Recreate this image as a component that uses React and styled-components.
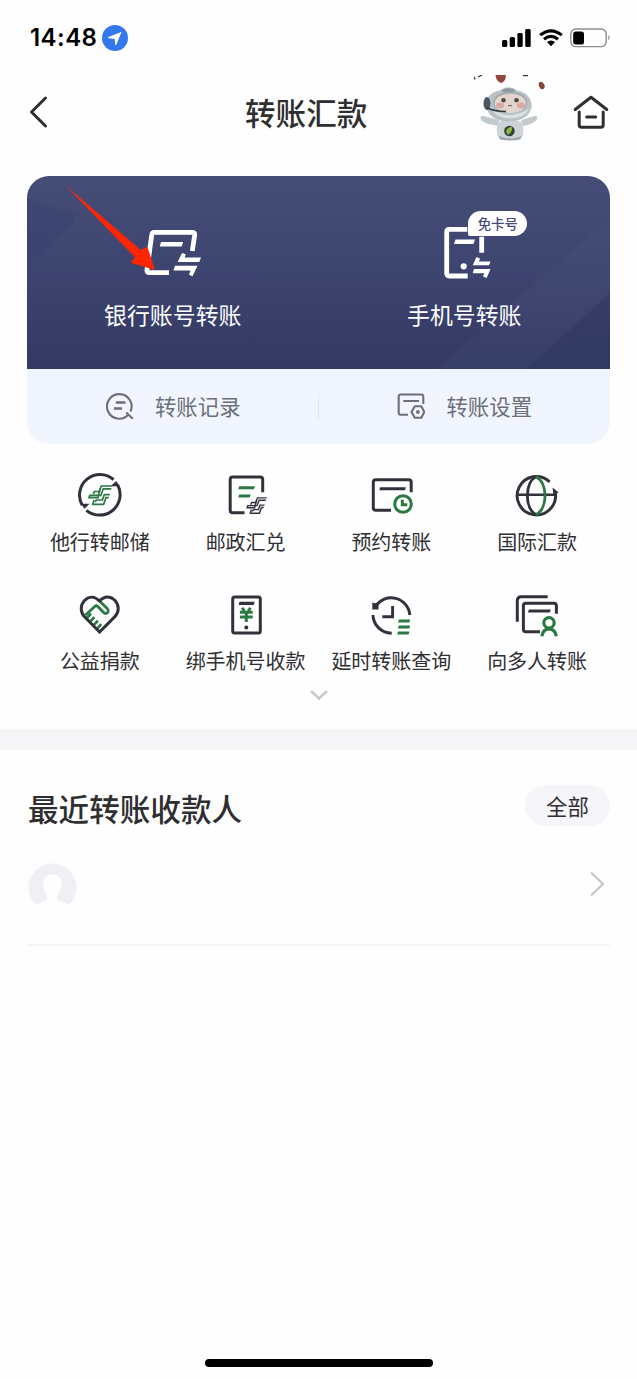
import styled, { createGlobalStyle } from 'styled-components'

const GlobalStyle = createGlobalStyle`
  * {
    box-sizing: border-box;
  }
  body {
    margin: 0;
    background: #fefefe;
    font-family: 'Noto Sans CJK SC', sans-serif;
    color: #2f2f31;
  }
  svg {
    display: block;
    flex: none;
  }
`

const Screen = styled.main`
  width: 637px;
  height: 1379px;
  display: flex;
  flex-direction: column;
  overflow: hidden;
`

const StatusBar = styled.div`
  height: 75px;
  padding: 1px 26px 0 30px;
  display: flex;
  align-items: center;
  justify-content: space-between;
`

const StatusGroup = styled.div`
  display: flex;
  align-items: center;
  gap: ${({ $gap }) => $gap}px;
`

const Time = styled.span`
  font: 600 24px/28px Inter, sans-serif;
  letter-spacing: 0.45px;
  color: #000;
`

const NavBar = styled.header`
  height: 72px;
  padding: 0 28px 0 27px;
  display: grid;
  grid-template-columns: 218px auto 1fr;
  align-items: center;
`

const NavTitle = styled.h1`
  margin: 0;
  font-size: 30.6px;
  font-weight: 500;
  line-height: 44px;
`

const NavActions = styled.div`
  display: flex;
  justify-content: flex-end;
  align-items: center;
  gap: 27px;
`

const Card = styled.section`
  margin: 29px 27px 0;
  border-radius: 22px;
  overflow: hidden;
  background: #f1f5fe;
`

const Hero = styled.div`
  position: relative;
  height: 193px;
  display: flex;
  background: linear-gradient(#464e78, #3d446f 50%, #333963);
`

const Backdrop = styled.svg`
  position: absolute;
  inset: 0;
`

const Pointer = styled.svg`
  position: absolute;
  left: 38px;
  top: 9px;
`

const HeroItem = styled.div`
  position: relative;
  flex: 1;
  display: flex;
  flex-direction: column;
  align-items: center;
  padding-top: 46px;
`

const HeroLabel = styled.span`
  margin-top: 15px;
  font-size: 22.9px;
  line-height: 34px;
  color: #fff;
`

const HeroIcon = styled.div`
  position: relative;
  height: 60px;
  padding-left: ${({ $shift = 0 }) => $shift}px;
`

const Badge = styled.span`
  position: absolute;
  left: 36px;
  top: -11px;
  width: 59px;
  height: 25px;
  border-radius: 13px 13px 13px 2px;
  background: #fff;
  color: #454a78;
  font-size: 13.4px;
  font-weight: 500;
  line-height: 24px;
  text-align: center;
  white-space: nowrap;
`

const SubBar = styled.div`
  height: 74.5px;
  display: flex;
  align-items: center;
`

const SubItem = styled.div`
  flex: 1;
  display: flex;
  align-items: center;
  justify-content: center;
  gap: 21px;
  padding-left: 1px;
  font-size: 21.4px;
  line-height: 32px;
  color: #6c6f7a;
`

const SubDivider = styled.div`
  width: 1px;
  height: 25px;
  margin-left: -1px;
  background: #e2e6f0;
`

const Services = styled.section`
  margin: 28px 27px 0;
  display: grid;
  grid-template-columns: repeat(4, 1fr);
  row-gap: 37px;
`

const Service = styled.div`
  height: 82px;
  display: flex;
  flex-direction: column;
  align-items: center;
  justify-content: space-between;
`

const ServiceLabel = styled.span`
  font-size: 20px;
  line-height: 25px;
  white-space: nowrap;
`

const More = styled.div`
  height: 56px;
  padding-top: 16px;
  display: flex;
  justify-content: center;
`

const Band = styled.div`
  height: 21px;
  background: #f6f6f9;
`

const Recent = styled.section`
  padding: 35px 27px 0;
`

const RecentHead = styled.div`
  height: 42px;
  display: flex;
  align-items: center;
  justify-content: space-between;
`

const RecentTitle = styled.h2`
  margin: 5px 0 0 1px;
  font-size: 30.6px;
  font-weight: 500;
  line-height: 42px;
`

const AllButton = styled.button`
  width: 85px;
  height: 41px;
  padding: 0;
  border: none;
  border-radius: 21px;
  background: #f6f6fa;
  color: #2f2f31;
  font: 400 21.4px/40px 'Noto Sans CJK SC', sans-serif;
`

const PayeeRow = styled.div`
  height: 119px;
  padding: 0 4px 2px 0;
  display: flex;
  align-items: center;
  justify-content: space-between;
  border-bottom: 2px solid #f5f5f7;
`

const HomeIndicator = styled.div`
  width: 228px;
  height: 8px;
  margin: auto auto 12px;
  border-radius: 4px;
  background: #000;
`

const DARK = '#32323d'
const GREEN = '#2b7a43'

const stroke = (color, width) => ({ fill: 'none', stroke: color, strokeWidth: width })

// postal emblem, drawn as stepped double strokes
const PostMark = ({ color, x, y, scale = 1 }) => (
  <g transform={`translate(${x} ${y}) scale(${scale})`} {...stroke(color, 1.7)}>
    <path d="M22.500 1H11.500L9.500 6.500H4.500L3.500 9.300" />
    <path d="M21.500 3.800H13.500L11 10.300H0L-.800 12.700H9" />
    <path d="M20 9.700H14.500L12.600 15H6.500L5.500 17.200" />
    <path d="M19 12.600H16.200L13.800 19.300H3L4.200 15" />
    <path d="M10.500 3.500L8 12.500" />
  </g>
)

const ServiceIcon = ({ children }) => (
  <svg width="48" height="48" viewBox="0 0 48 48" {...stroke(DARK, 3)}>{children}</svg>
)

const services = [
  {
    name: '他行转邮储',
    icon: (
      <ServiceIcon>
        <path d="M6.200 33.200A20.500 20.500 0 0 1 37.600 7.700M41.600 12.800A20.500 20.500 0 0 1 10.400 38.300" />
        <path d="M4.900 31.800h8.600l-5 5zM43.500 14.300h-8.900l5.600-5.200z" fill={DARK} stroke="none" />
        <PostMark color={GREEN} x={13.8} y={13} />
      </ServiceIcon>
    ),
  },
  {
    name: '邮政汇兑',
    icon: (
      <ServiceIcon>
        <path d="M40.700 20.300V7.400Q40.700 4.900 38.200 4.900H10.700Q8.200 4.900 8.200 7.400V38.300Q8.200 40.800 10.700 40.800H22.500" />
        <path d="M16.300 17.200l.8-3h15.800l-1 3zM16.300 25.400l.8-3h11.600l-1 3z" fill={GREEN} stroke="none" />
        <PostMark color={DARK} x={25.8} y={25} scale={0.84} />
      </ServiceIcon>
    ),
  },
  {
    name: '预约转账',
    icon: (
      <ServiceIcon>
        <path d="M44.200 20.300V10.300Q44.200 7.800 41.700 7.800H8.800Q6.300 7.800 6.300 10.300V35.800Q6.300 38.300 8.800 38.300H24" />
        <path d="M12.300 18.200l.8-3h25.800l-1 3z" fill={DARK} stroke="none" />
        <circle cx="36" cy="32" r="8.300" stroke={GREEN} />
        <path d="M35.300 27.800v5h5" stroke={GREEN} />
      </ServiceIcon>
    ),
  },
  {
    name: '国际汇款',
    icon: (
      <ServiceIcon>
        <path d="M36.600 9.800A19.200 19.200 0 1 0 42.400 21.200" />
        <path d="M4 22.700H44" strokeWidth="2.500" />
        <path d="M23 4.600C11.500 11 11.500 36.500 23 42.700" strokeWidth="2.900" />
        <path d="M23 4.600C35 11 35 36.500 23 42.700" stroke={GREEN} strokeWidth="2.900" />
        <path d="M39.600 15.500l6 5-5.300 2.300z" fill={DARK} stroke="none" />
      </ServiceIcon>
    ),
  },
  {
    name: '公益捐款',
    icon: (
      <ServiceIcon>
        <path d="M9.500 24L19 15.200Q20.500 14 21.800 15.500L28 21.800Q30.500 23.500 32 21Q32.800 19.300 31.500 17.800L23.500 10" stroke={GREEN} strokeWidth="2.800" />
        <path d="M10.500 27.500L15 22.500M13.800 31.200L18.300 26.200M17.300 34.700L21.800 29.700M20.800 38.200L25.300 33.200" stroke={GREEN} strokeWidth="2.700" />
        <path d="M23.500 41L8.600 25.800C4 21 4.200 13.800 8.800 9.200C13.200 5 18.600 5.200 23.400 10C28.600 4.800 34.300 5 38.600 9C43.300 13.600 43.500 21 38.900 25.600Z" />
      </ServiceIcon>
    ),
  },
  {
    name: '绑手机号收款',
    icon: (
      <ServiceIcon>
        <rect x="10.700" y="5.900" width="27.600" height="36.200" rx="2" />
        <path d="M16.600 14l.9-3.300h15.200l-1 3.300z" fill={DARK} stroke="none" />
        <path d="M20.200 16.800l2 3.200M28.400 16.800l-2 3.200M17.900 21.200h12.800M17.900 26h12.800M24.300 20v11" stroke={GREEN} />
        <circle cx="24.300" cy="36.500" r="2" fill={DARK} stroke="none" />
      </ServiceIcon>
    ),
  },
  {
    name: '延时转账查询',
    icon: (
      <ServiceIcon>
        <path d="M8.500 15.500A18.600 18.600 0 0 1 42.800 24M6 24A18.600 18.600 0 0 0 24.700 42.200" />
        <path d="M5.300 11.500l6.200 1.600v5.400H5.300z" fill={DARK} stroke="none" />
        <path d="M25.600 15V25.800H15.300" strokeWidth="2.900" />
        <path d="M31 31.400l.8-3h11.400l-.8 3zM31 37.400l.8-3h11.400l-.8 3zM30.200 43.400l.8-3h11.400l-.8 3z" fill={GREEN} stroke="none" />
      </ServiceIcon>
    ),
  },
  {
    name: '向多人转账',
    icon: (
      <ServiceIcon>
        <path d="M4.300 30.700V9.700Q4.300 5.700 8.300 5.700H34.700" />
        <path d="M43.400 22.700V14.800Q43.400 12.300 40.900 12.300H12.900Q10.400 12.300 10.400 14.800V38.300Q10.400 40.800 12.900 40.800H27" />
        <path d="M15 21.500l.800-3h22l-1 3z" fill={DARK} stroke="none" />
        <g stroke={GREEN} strokeWidth="3.200">
          <circle cx="36" cy="31.800" r="5.200" />
          <path d="M28.900 45.200Q29.800 38.200 36 38.200Q42.200 38.200 43.300 45.200" />
        </g>
      </ServiceIcon>
    ),
  },
]

const MascotArt = styled.svg`
  margin-bottom: 6px;
`

const Mascot = () => (
  <MascotArt width="72" height="68" viewBox="0 0 72 68">
    <path d="M0 1.500l1 3M4 2l4-2M49 .5h5" {...stroke('#3d3537', 1.3)} />
    <path d="M21.500 0h10.300q.5 6-4.500 8q-5.500-1.500-5.800-8z" fill="#91473a" />
    <ellipse cx="67.700" cy="10.500" rx="2.700" ry="3.800" fill="#84453c" transform="rotate(-25 67.700 10.500)" />
    <path d="M24 50.500Q14 50 7.500 45.500Q4.500 40.500 9.500 41L25 45zM47.500 45L60 41Q65 40 62.500 45Q57 50 49 51z" fill="#c3cace" />
    <path d="M24 47Q36 43 48 47Q51 58 47.500 63.500Q36 67 25 63.500Q21 57 24 47z" fill="#cdd3d6" />
    <path d="M25 61Q36 66 47.500 61L46 64.500Q36 66.500 26 64.500z" fill="#9fa8ae" />
    <path d="M12 30Q12 18 26 15.500Q34 9 43 15.500Q57 18 57.700 31Q56 45.500 35 46.500Q14 46 12 30z" fill="#b9c2c6" />
    <path d="M27 15.500Q34 10.500 42 15.500L39 17H30z" fill="#909ca2" />
    <path d="M18 34Q34 46 55 34Q51 43 36 43.500Q22 43 18 34z" fill="#dce1e3" />
    <ellipse cx="36.300" cy="27.500" rx="17" ry="10.800" fill="#9daaaf" />
    <ellipse cx="36.300" cy="28.300" rx="15.600" ry="9.900" fill="#e3d4ce" />
    <ellipse cx="26" cy="30.500" rx="4" ry="3" fill="#dfa7a2" />
    <ellipse cx="47" cy="30.500" rx="4" ry="3" fill="#dfa7a2" />
    <circle cx="29.500" cy="25.300" r="2.300" fill="#514b48" />
    <circle cx="42.500" cy="25.300" r="2.300" fill="#514b48" />
    <path d="M34 31q2-1.500 4 0" {...stroke('#65514e', 1)} />
    <ellipse cx="13" cy="28.500" rx="3.500" ry="6.500" fill="#4b565e" />
    <path d="M13 33Q21 36.500 32 36.500" {...stroke('#323a40', 1.600)} />
    <circle cx="35.400" cy="56" r="5.300" fill="#334041" />
    <path d="M32 57Q33 52 38 52Q38.500 57 34 60z" fill="#8fb83f" />
  </MascotArt>
)

const App = () => (
  <Screen>
    <GlobalStyle />
    <StatusBar>
      <StatusGroup $gap={5}>
        <Time>14:48</Time>
        <svg width="26" height="26" viewBox="0 0 26 26">
          <circle cx="13" cy="13" r="13" fill="#3478ed" />
          <path d="M19.600 6.700L14.300 19.700Q13.500 20.700 13.100 19.500L12.700 13.900L6.800 13.200Q5.500 12.700 6.600 12z" fill="#fff" />
        </svg>
      </StatusGroup>
      <StatusGroup $gap={7.5}>
        <svg width="29" height="18" viewBox="0 0 29 18">
          <rect x="0" y="11" width="5.300" height="7" rx="1.500" />
          <rect x="7.700" y="8" width="5.300" height="10" rx="1.500" />
          <rect x="15.400" y="4" width="5.300" height="14" rx="1.500" />
          <rect x="23.200" y="0" width="5.500" height="18" rx="1.500" />
        </svg>
        <svg width="24" height="18" viewBox="0 0 25 18">
          <path d="M1.200 6Q12.500-3 23.800 6M5.200 10.200Q12.500 4.500 19.800 10.200" {...stroke('#000', 3.300)} />
          <path d="M8.300 13.200Q12.500 10 16.700 13.200L12.500 17.600z" />
        </svg>
        <svg width="41" height="20" viewBox="0 0 41 20">
          <rect x=".8" y="1" width="35.400" height="17.600" rx="5" {...stroke('#8d8d8d', 1.400)} />
          <rect x="3.200" y="3.400" width="10.800" height="13" rx="2.500" />
          <path d="M38.300 6.800q2.600 3 0 6z" fill="#8d8d8d" />
        </svg>
      </StatusGroup>
    </StatusBar>

    <NavBar>
      <svg width="24" height="34" viewBox="0 0 24 34">
        <path d="M18.500 3L4.500 17L18.500 31" {...stroke('#2f2f31', 3)} strokeLinecap="round" strokeLinejoin="round" />
      </svg>
      <NavTitle>转账汇款</NavTitle>
      <NavActions>
        <Mascot />
        <svg width="36" height="36" viewBox="0 0 36 36" {...stroke('#2f2f31', 3)} strokeLinecap="round" strokeLinejoin="round">
          <path d="M2.200 15.500L18 3.200L33.800 15.500M6.200 18V31Q6.200 33.300 8.500 33.300H28Q30.200 33.300 30.200 31V18M13.700 23H22.700" />
        </svg>
      </NavActions>
    </NavBar>

    <Card>
      <Hero>
        <Backdrop width="583" height="193" viewBox="0 0 583 193">
          <path d="M0 22L48 38V45L0 88z" fill="#343b6a" opacity=".3" />
          <path d="M410 193L583 42V193z" fill="#626896" opacity=".1" />
          <path d="M500 193L583 117V193z" fill="#2b315c" opacity=".4" />
        </Backdrop>
        <HeroItem>
          <HeroIcon>
            <svg width="64" height="60" viewBox="0 -4 64 60">
              <path d="M51.300 25L53.700 9Q54 6.300 51 6.300H13.300Q11 6.300 10.700 9L6 44Q5.700 46.700 8.300 46.700H28" {...stroke('#fff', 4.800)} />
              <path d="M18.800 20.500l1.200-4.600h22l-1.200 4.600zM41 27l3.800 1.300-1.200 3.200H60l-1.700 4.500H36.700zM34 39.800h22.500l-5 10.500-3.500-1.500 1.500-4.400H32.500z" fill="#fff" />
            </svg>
          </HeroIcon>
          <HeroLabel>银行账号转账</HeroLabel>
        </HeroItem>
        <HeroItem>
          <HeroIcon $shift={8}>
            <svg width="56" height="60" viewBox="0 0 56 60">
              <path d="M27.300 7.300H9.300Q6.700 7.300 6.700 10V51.300Q6.700 54 9.300 54H27.700M41.700 14.700V30.700" {...stroke('#fff', 4.800)} />
              <path d="M14 22l1.500-4.600H35L33.500 22zM36.500 35l3.500 1.500-1 3h11.500L49 43.300H32.700zM34 47h16.500l-3.800 9-3.700-1.500 1.200-3.300H32.700z" fill="#fff" />
              <circle cx="23.700" cy="44.300" r="3.100" fill="#fff" />
            </svg>
            <Badge>免卡号</Badge>
          </HeroIcon>
          <HeroLabel>手机号转账</HeroLabel>
        </HeroItem>
        <Pointer width="92" height="88" viewBox="0 0 92 88">
          <path d="M0 0L75.700 65L82.300 61.700L90 85L65.700 77.700L70 72.300z" fill="#fe2600" />
        </Pointer>
      </Hero>
      <SubBar>
        <SubItem>
          <svg width="28" height="28" viewBox="0 0 28 28" {...stroke('#6c6f7a', 2.100)}>
            <path d="M22.300 22.800A12.300 12.300 0 1 1 24.500 19.500M20.300 20.500L26.800 26.800" />
            <path d="M9.800 10.500H19.500M8 16.500H16" strokeWidth="2.300" />
          </svg>
          转账记录
        </SubItem>
        <SubDivider />
        <SubItem>
          <svg width="28" height="28" viewBox="0 0 28 28" {...stroke('#6c6f7a', 2.100)}>
            <path d="M26.300 12V4.500Q26.300 2.500 24.300 2.500H3.700Q1.700 2.500 1.700 4.500V20.800Q1.700 22.800 3.700 22.800H11M6.300 9H22" />
            <path d="M14.500 20L17.800 14.300H24.300L27.300 20L24.300 25.700H17.800z" strokeLinejoin="round" />
            <circle cx="20.900" cy="20" r="1.900" fill="#6c6f7a" stroke="none" />
          </svg>
          转账设置
        </SubItem>
      </SubBar>
    </Card>

    <Services>
      {services.map(({ name, icon }) => (
        <Service key={name}>
          {icon}
          <ServiceLabel>{name}</ServiceLabel>
        </Service>
      ))}
    </Services>
    <More>
      <svg width="20" height="12" viewBox="0 0 20 12">
        <path d="M2 2L10 9.500L18 2" {...stroke('#c9c9cd', 2.400)} />
      </svg>
    </More>

    <Band />

    <Recent>
      <RecentHead>
        <RecentTitle>最近转账收款人</RecentTitle>
        <AllButton>全部</AllButton>
      </RecentHead>
      <PayeeRow>
        <svg width="50" height="46" viewBox="0 0 50 46">
          <path d="M8.500 43.500A24 24 0 1 1 42.500 43.500Q38 41.500 31 39.500Q29.500 37 31.500 32.500Q34.500 29 34.500 22.500Q34 13.500 25.200 13.500Q16.500 13.500 16 22.500Q16 29 19 32.500Q21 37 19.500 39.500Q13 41.500 8.500 43.500z" fill="#efeff4" />
        </svg>
        <svg width="18" height="28" viewBox="0 0 18 28">
          <path d="M3 2.500L15 14L3 25.500" {...stroke('#c7c7cb', 2.200)} />
        </svg>
      </PayeeRow>
    </Recent>

    <HomeIndicator />
  </Screen>
)

export default App
